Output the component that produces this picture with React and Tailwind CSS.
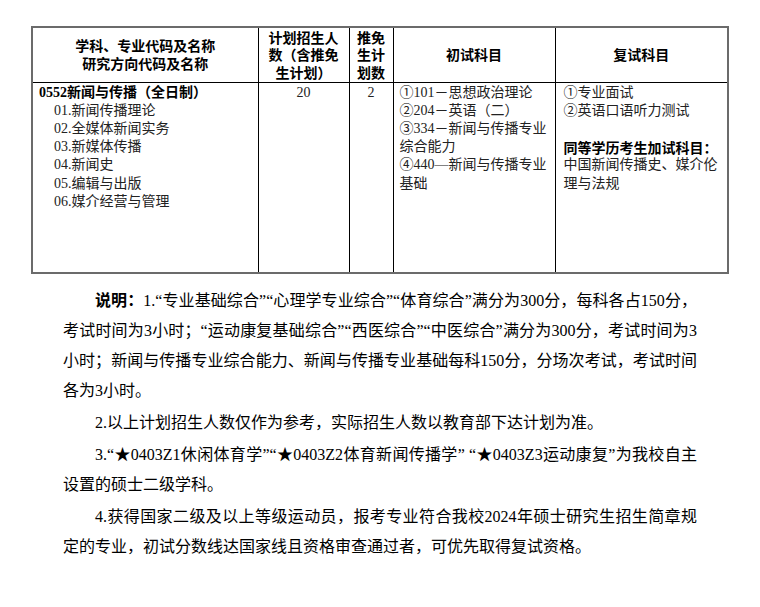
import React from "react";

const serif = { fontFamily: '"Liberation Serif", "Noto Sans CJK SC", serif' };

const directions = [
  "01.新闻传播理论",
  "02.全媒体新闻实务",
  "03.新媒体传播",
  "04.新闻史",
  "05.编辑与出版",
  "06.媒介经营与管理",
];

const firstExam = [
  "①101－思想政治理论",
  "②204－英语（二）",
  "③334－新闻与传播专业综合能力",
  "④440—新闻与传播专业基础",
];

export default function App() {
  return (
    <div className="min-h-[607px] w-[760px] bg-white text-black" style={serif}>
      <div className="pl-[31px] pt-[26px]">
        <table className="w-[696px] table-fixed border-collapse border-2 border-[#6b6b6b]">
          <colgroup>
            <col className="w-[226px]" />
            <col className="w-[91px]" />
            <col className="w-[44px]" />
            <col className="w-[162px]" />
            <col className="w-[173px]" />
          </colgroup>
          <thead>
            <tr className="h-[55px] font-['Noto_Sans_CJK_SC'] text-[14px] font-bold leading-[17.5px]">
              <th className="border border-black px-2 text-center align-middle">
                学科、专业代码及名称
                <br />
                研究方向代码及名称
              </th>
              <th className="border border-black px-[8px] text-center align-middle">
                计划招生人数（含推免生计划）
              </th>
              <th className="border border-black px-[6px] text-center align-middle">
                推免生计划数
              </th>
              <th className="border border-black text-center align-middle">初试科目</th>
              <th className="border border-black text-center align-middle">复试科目</th>
            </tr>
          </thead>
          <tbody>
            <tr className="h-[191px] text-[14px] leading-[18.2px] text-[#222]">
              <td className="border border-black pl-[6px] pt-[1px] align-top">
                <div className="font-bold text-black">0552新闻与传播（全日制）</div>
                {directions.map((d) => (
                  <div key={d} className="pl-[15px]">
                    {d}
                  </div>
                ))}
              </td>
              <td className="border border-black pt-[1px] text-center align-top">20</td>
              <td className="border border-black pt-[1px] text-center align-top">2</td>
              <td className="border border-black pl-[6px] pr-[6px] pt-[1px] align-top">
                {firstExam.map((t) => (
                  <div key={t}>{t}</div>
                ))}
              </td>
              <td className="border border-black pl-[8px] pr-[8px] pt-[1px] align-top">
                <div>①专业面试</div>
                <div>②英语口语听力测试</div>
                <div className="h-[18.2px]" />
                <div className="font-['Noto_Sans_CJK_SC'] font-bold text-black">同等学历考生加试科目：</div>
                <div>中国新闻传播史、媒介伦理与法规</div>
              </td>
            </tr>
          </tbody>
        </table>
      </div>

      <div className="ml-[63px] mt-[10px] flex w-[634px] flex-col gap-[2px] text-justify text-[16px] leading-[30px]">
        <p className="indent-[32px]">
          <span className="font-['Noto_Sans_CJK_SC'] font-bold">说明：</span>
          1.“专业基础综合”“心理学专业综合”“体育综合”满分为300分，每科各占150分，考试时间为3小时；“运动康复基础综合”“西医综合”“中医综合”满分为300分，考试时间为3小时；新闻与传播专业综合能力、新闻与传播专业基础每科150分，分场次考试，考试时间各为3小时。
        </p>
        <p className="indent-[32px]">2.以上计划招生人数仅作为参考，实际招生人数以教育部下达计划为准。</p>
        <p className="indent-[32px]">
          3.“★0403Z1休闲体育学”“★0403Z2体育新闻传播学” “★0403Z3运动康复”为我校自主设置的硕士二级学科。
        </p>
        <p className="indent-[32px]">
          4.获得国家二级及以上等级运动员，报考专业符合我校2024年硕士研究生招生简章规定的专业，初试分数线达国家线且资格审查通过者，可优先取得复试资格。
        </p>
      </div>
    </div>
  );
}
